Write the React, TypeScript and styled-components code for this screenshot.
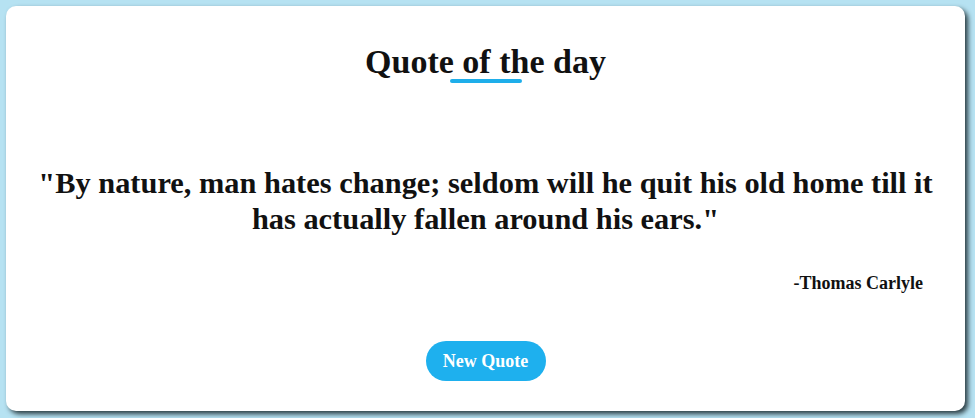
import styled, { createGlobalStyle } from "styled-components";

const GlobalStyle = createGlobalStyle`
  html, body {
    margin: 0;
    padding: 0;
    background-color: #b6e2f2;
  }
  body {
    font-family: "Liberation Serif", "DejaVu Serif", serif;
  }
`;

const Page = styled.div`
  padding: 6px 10px 7px 6px;
  min-height: 418px;
  box-sizing: border-box;
`;

const Card = styled.div`
  background-color: white;
  border-radius: 10px;
  box-shadow: 3px 3px 5px #2a3c42;
  height: 405px;
  box-sizing: border-box;
  padding: 36px 30px 30px 30px;
  display: flex;
  flex-direction: column;
  align-items: center;
`;

const Title = styled.h1`
  margin: 0;
  font-size: 34px;
  font-weight: 700;
  color: #111;
  text-align: center;
  line-height: 40px;
`;

const Underline = styled.div`
  width: 72px;
  height: 4px;
  border-radius: 2px;
  background-color: #1eaeea;
  margin-top: -3px;
`;

const Quote = styled.p`
  margin: 82px 0 0;
  font-size: 30.4px;
  font-weight: 700;
  line-height: 36px;
  color: #111;
  text-align: center;
`;

const Author = styled.p`
  align-self: flex-end;
  margin: 36px 12px 0 0;
  font-size: 18px;
  font-weight: 700;
  color: #111;
`;

const NewQuoteButton = styled.button`
  margin-top: auto;
  width: 120px;
  height: 40px;
  border: none;
  border-radius: 20px;
  background-color: #1eb0ee;
  color: white;
  font-family: "Liberation Serif", "DejaVu Serif", serif;
  font-size: 18px;
  font-weight: 700;
  cursor: pointer;
  &:hover {
    opacity: 0.9;
  }
`;

export default function App() {
  return (
    <>
      <GlobalStyle />
      <Page>
        <Card>
          <Title>Quote of the day</Title>
          <Underline />
          <Quote>
            "By nature, man hates change; seldom will he quit his old home till it
            has actually fallen around his ears."
          </Quote>
          <Author>-Thomas Carlyle</Author>
          <NewQuoteButton>New Quote</NewQuoteButton>
        </Card>
      </Page>
    </>
  );
}
